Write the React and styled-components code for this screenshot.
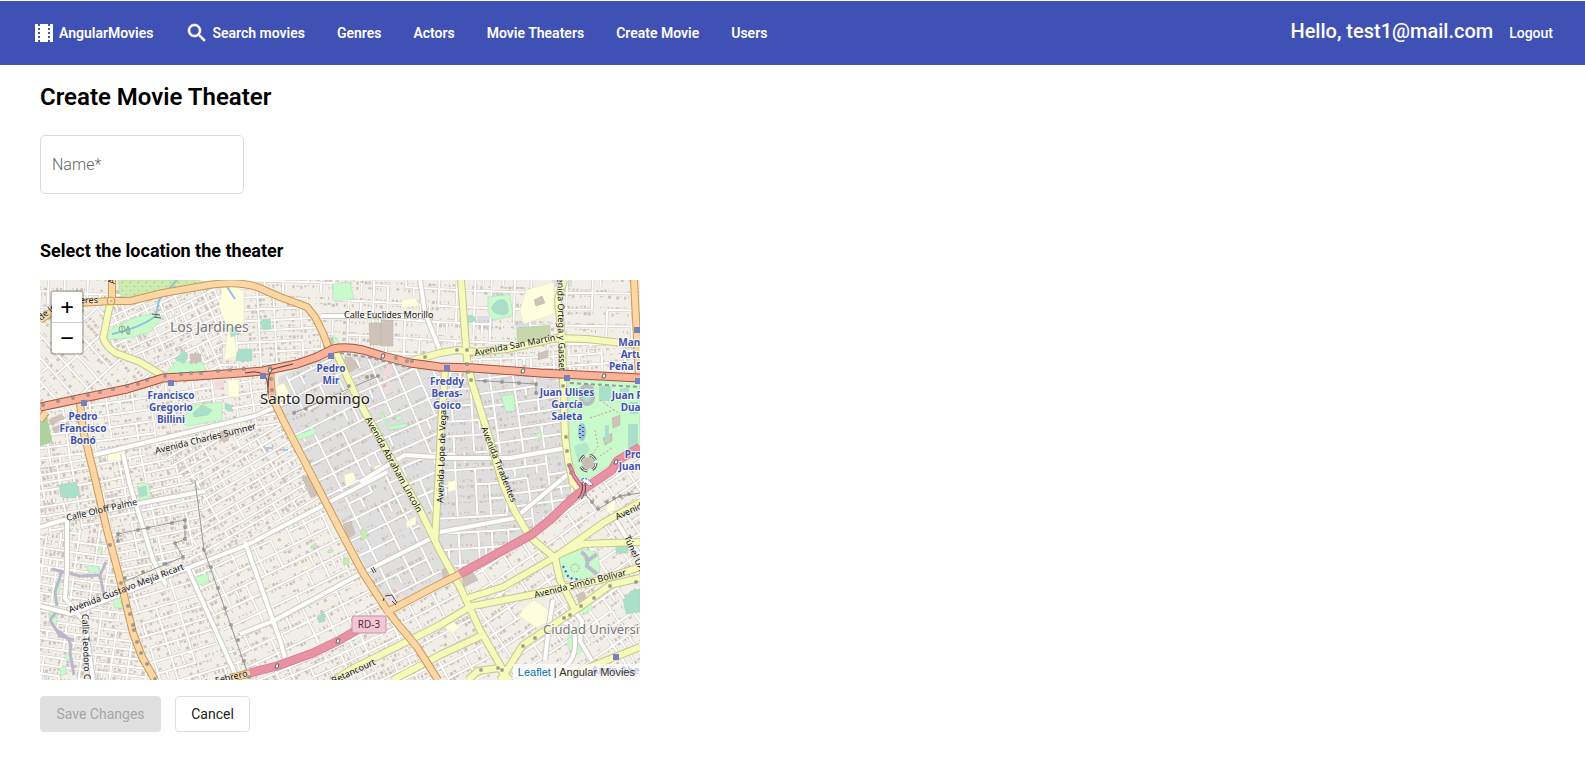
import React from "react";
import styled, { createGlobalStyle } from "styled-components";

const GlobalStyle = createGlobalStyle`
  *, *::before, *::after { box-sizing: border-box; }
  body {
    margin: 0;
    background: #fff;
    color: #000;
    font-family: Roboto, "Liberation Sans", sans-serif;
    font-size: 14px;
  }
`;

/* ---------- Toolbar ---------- */

const Toolbar = styled.header`
  display: flex;
  align-items: center;
  justify-content: space-between;
  height: 64px;
  margin-top: 1px;
  padding: 0 32px;
  background: #3f51b5;
  color: #fff;
`;

const NavLinks = styled.nav`
  display: flex;
  align-items: center;
  gap: 32px;
`;

const NavLink = styled.a`
  display: inline-flex;
  align-items: center;
  gap: 3px;
  color: inherit;
  font-size: 14px;
  font-weight: 600;
  line-height: 24px;
  text-decoration: none;
  white-space: nowrap;
`;

const Account = styled.div`
  display: flex;
  align-items: baseline;
  gap: 16px;
  padding-bottom: 4px;
`;

const Greeting = styled.span`
  font-size: 20px;
  font-weight: 500;
  line-height: 32px;
  white-space: nowrap;
`;

const LogoutButton = styled.button`
  padding: 0;
  border: 0;
  background: none;
  color: inherit;
  font: 500 14px/24px Roboto, "Liberation Sans", sans-serif;
  cursor: pointer;
`;

const ToolbarIcon = styled.svg`
  width: 24px;
  height: 24px;
  fill: currentColor;
`;

/* ---------- Form ---------- */

const Page = styled.main`
  padding: 16px 40px;
`;

const Title = styled.h1`
  margin: 0 0 22px;
  font-size: 24px;
  font-weight: 600;
  line-height: 32px;
`;

const Subtitle = styled.h2`
  margin: 41px 0 13px;
  font-size: 18px;
  font-weight: 700;
  line-height: 32px;
`;

const NameInput = styled.input`
  display: block;
  width: 204px;
  height: 59px;
  padding: 0 11px;
  border: 1px solid #dcdcdc;
  border-radius: 5px;
  background: #fff;
  color: #222;
  font: 400 16px/24px Roboto, "Liberation Sans", sans-serif;
  &::placeholder { color: #666; font-weight: 300; opacity: 1; }
`;

const Actions = styled.div`
  display: flex;
  gap: 14px;
  margin-top: 16px;
`;

const Button = styled.button`
  min-width: ${(p) => (p.$outlined ? 75 : 121)}px;
  height: 36px;
  padding: 0 15px;
  border: ${(p) => (p.$outlined ? "1px solid #e0e0e0" : "0")};
  border-radius: 4px;
  background: ${(p) => (p.$outlined ? "#fff" : "#e0e0e0")};
  color: ${(p) => (p.$outlined ? "#1c1c1c" : "#a6a6a6")};
  font: 400 14px/34px Roboto, "Liberation Sans", sans-serif;
`;

/* ---------- Map ---------- */

const MapFrame = styled.section`
  position: relative;
  width: 600px;
  max-width: 100%;
  height: 400px;
  overflow: hidden;
  background: #f2efe9;
`;

const MapDrawing = styled.svg`
  display: block;
  width: 600px;
  height: 400px;
  font-family: "Noto Sans", "Open Sans", sans-serif;
`;

const ZoomBar = styled.div`
  position: absolute;
  top: 10px;
  left: 10px;
  border: 2px solid rgba(0, 0, 0, 0.2);
  border-radius: 4px;
  background-clip: padding-box;
`;

const ZoomButton = styled.button`
  display: block;
  width: 30px;
  height: 30px;
  padding: 0;
  border: 0;
  border-radius: ${(p) => (p.$last ? "0 0 2px 2px" : "2px 2px 0 0")};
  background: #fff;
  color: #000;
  font: 400 22px/30px "DejaVu Sans Mono", monospace;
  & + & { height: 31px; border-top: 1px solid #ccc; }
`;

const Attribution = styled.div`
  position: absolute;
  right: 0;
  bottom: 0;
  padding: 0 5px;
  background: rgba(255, 255, 255, 0.7);
  color: #333;
  font: 11px/16px "Liberation Sans", Arial, sans-serif;
  a { color: #0078a8; text-decoration: none; }
`;

const District = styled.g`
  fill: none;
  .blocks { fill: #cfc2b9; }
  .kerb { stroke: #cbc6bf; stroke-width: 3; }
  .street { stroke: #fff; stroke-width: 2; }
`;

const StreetLabel = styled.text`
  fill: #111;
  stroke: rgba(255, 255, 255, 0.45);
  stroke-width: 1px;
  paint-order: stroke;
  font-size: 9px;
`;

const StationLabel = styled.text`
  fill: #4052ad;
  stroke: rgba(255, 255, 255, 0.8);
  stroke-width: 2px;
  paint-order: stroke;
  font-size: 10px;
  font-weight: 700;
`;

const areaSizes = { city: 15, suburb: 14, campus: 13 };

const AreaLabel = styled.text`
  fill: ${(p) => (p.$kind === "city" ? "#222" : "#777")};
  stroke: rgba(255, 255, 255, 0.6);
  stroke-width: 2px;
  paint-order: stroke;
  font-size: ${(p) => areaSizes[p.$kind]}px;
`;

/* Street grids: poly = outline, angle of the long streets, du/dv = block size */
const districts = [
  { poly: "0,0 600,0 600,66 430,72 370,82 300,68 275,37 240,17 203,3 163,6 90,21 60,18 0,36", angle: 2, du: 20, dv: 17 },
  { poly: "0,38 70,22 63,58 73,72 125,96 44,118 0,127", angle: 48, du: 24, dv: 15 },
  { poly: "72,22 163,7 182,5 182,90 125,96 75,72 64,58", angle: -24, du: 16, dv: 9 },
  { poly: "182,5 203,4 267,28 292,68 225,91 182,93", angle: -3, du: 21, dv: 11 },
  { poly: "430,74 600,67 600,98 525,96 430,87", angle: -3, du: 18, dv: 12 },
  { poly: "0,128 125,98 232,95 232,117 243,145 120,175 50,175 0,190", angle: -8, du: 21, dv: 12 },
  { poly: "0,188 50,175 54,200 66,245 0,257", angle: -10, du: 17, dv: 8 },
  { poly: "50,176 120,174 160,165 165,222 150,285 82,304 60,222", angle: -12, du: 26, dv: 9 },
  { poly: "120,174 243,143 270,192 283,218 144,291 165,222", angle: -30, du: 26, dv: 9 },
  { poly: "0,256 66,245 82,307 93,353 115,400 0,400", angle: 8, du: 15, dv: 9 },
  { poly: "82,308 144,287 210,395 190,400 115,400 93,350", angle: -17, du: 22, dv: 13 },
  { poly: "144,287 284,220 347,332 318,348 210,393", angle: -25, du: 19, dv: 15 },
  { poly: "238,100 295,75 328,135 405,300 348,330 243,140", angle: -26, du: 20, dv: 17 },
  { poly: "297,73 340,77 400,88 402,130 396,262 365,205 328,130", angle: -23, du: 20, dv: 17 },
  { poly: "404,90 430,90 448,150 475,233 490,256 420,294 398,262", angle: -3, du: 18, dv: 16 },
  { poly: "430,90 523,100 528,180 540,210 491,255 475,232 448,150", angle: -8, du: 20, dv: 13 },
  { poly: "420,296 491,257 545,213 600,167 600,400 465,400 440,350", angle: -34, du: 22, dv: 15 },
  { poly: "350,334 420,298 440,350 465,400 400,400 377,367", angle: -28, du: 22, dv: 14 },
  { poly: "210,396 320,350 347,334 377,367 398,400 210,400", angle: -24, du: 16, dv: 10 },
];

function seeded(seed) {
  let s = seed * 7919 + 17;
  return () => {
    s = (s * 16807) % 2147483647;
    return s / 2147483647;
  };
}

function layOut({ poly, angle, du, dv }, index) {
  const rnd = seeded(index + 3);
  const pts = poly.split(" ").map((p) => p.split(",").map(Number));
  const xs = pts.map((p) => p[0]);
  const ys = pts.map((p) => p[1]);
  const cx = (Math.min(...xs) + Math.max(...xs)) / 2;
  const cy = (Math.min(...ys) + Math.max(...ys)) / 2;
  const r = Math.hypot(Math.max(...xs) - cx, Math.max(...ys) - cy) + 6;
  let streets = "";
  let blocks = "";

  const columns = [];
  for (let u = -r; u < r; u += du * (0.7 + rnd() * 0.6)) columns.push(u);

  for (let v = -r; v < r; v += dv) {
    const bend = rnd() * 2 - 1;
    columns.forEach((u, i) => {
      const next = columns[i + 1] ?? r;
      const y = v + bend + Math.sin(i / 3) * 1.5;
      const nextY = v + bend + Math.sin((i + 1) / 3) * 1.5;
      if (rnd() > 0.14) streets += `M${u.toFixed(1)} ${y.toFixed(1)}L${next.toFixed(1)} ${nextY.toFixed(1)}`;
      if (rnd() > 0.22) streets += `M${u.toFixed(1)} ${y.toFixed(1)}v${dv}`;
      if (rnd() > 0.86) {
        streets += `M${((u + next) / 2).toFixed(1)} ${y.toFixed(1)}v${(dv * 0.6).toFixed(1)}`;
      }
    });
    for (let b = -r; b < r; b += 4) {
      for (const y of [v + 2, v + dv - 4]) {
        if (rnd() > 0.3) {
          const w = 1 + Math.floor(rnd() * 3);
          const h = 1 + Math.floor(rnd() * 3);
          blocks += `M${b.toFixed(1)} ${(y + rnd()).toFixed(1)}h${w}v${h}h${-w}z`;
        }
      }
    }
  }
  return { streets, blocks, transform: `translate(${cx} ${cy}) rotate(${angle})` };
}

const plans = districts.map((d, i) => ({ ...d, ...layOut(d, i), id: `district-${i}` }));

const greens = [
  ["#cdebb0", "M78 0H160L163 3 123 11 92 18 80 15z"],
  ["#c8facc", "M66 60L70 50 93 38 113 34 123 37 110 52 90 58z"],
  ["#c8facc", "M127 92L141 76 150 84 165 83V92L130 95z"],
  ["#aae0cb", "M135 79L144 70 148 76 144 84z"],
  ["#aae0cb", "M197 72l4-3h11v12h-16z"],
  ["#aae0cb", "M190 48l6-2 2 8-7 3z"],
  ["#c8facc", "M142 143l10-18 30-3v18l-34 6z"],
  ["#aae0cb", "M153 133l9-8 10 5-4 5-14 2z"],
  ["#aae0cb", "M185 123l6 2 2 7-8-3z"],
  ["#add19e", "M0 140l7-3 5 25-12 4z"],
  ["#aae0cb", "M19 205l17-3 4 12-6 4-13-1z"],
  ["#c8facc", "M97 204l11-1 3 14-11 4z"],
  ["#aae0cb", "M98 208l8-2 1 9-7 2z"],
  ["#c8facc", "M293 4l17-2 4 17-20 2z"],
  ["#aae0cb", "M221 40l9-1 1 10-9 1z"],
  ["#c8facc", "M290 54l8 6 2 8-8-7z"],
  ["#c8facc", "M448 17l22-3 3 22-20 4-5-8z"],
  ["#aae0cb", "M457 21q9-5 11 6t-10 7-1-13z"],
  ["#c8d7ab", "M477 48l33-3v16l-33 6z"],
  ["#aae0cb", "M426 36q10-3 9 5l-8 3z"],
  ["#c8facc", "M528 100H600V166L580 178 547 200 540 201 530 177z"],
  ["#c8facc", "M342 132l8 14 18-3-2 4-16 3-10-17z"],
  ["#c8facc", "M355 137l6-2 1 5-5 1z"],
  ["#c8facc", "M255 156l21-8v6l-20 7z"],
  ["#c8facc", "M461 116l13-2 1 17-9 1z"],
  ["#c8facc", "M495 155l6-3 1 8z"],
  ["#cdebb0", "M321 249l6 2v7l-6 2zM303 279l6-1v6l-5 1zM271 266l5-3v4l-5 2zM288 270l5-1v3l-5 1z"],
  ["#c8facc", "M518 276l20-8 20 4 2 20-14 8-22-2z"],
  ["#aae0cb", "M576 264h12v9h-12z"],
  ["#aae0cb", "M583 320l8-9 9-2v23l-14 2z"],
  ["#c8facc", "M540 330l10-7 3 5-8 6z"],
  ["#c8facc", "M154 297l14-3 1 8-12 4z"],
  ["#aae0cb", "M277 337l7-5 1 9-6 2z"],
  ["#c8facc", "M72 318l6-4 5 14h-8z"],
  ["#c8facc", "M15 311q2-14 5-12t-2 16zM9 332h6l2 12-6 2zM24 378l6-5v8zM20 388l6-2v8l-6 2z"],
  ["#c8facc", "M47 286h12v6l-10 1zM57 270l4-2 1 7z"],
  ["#c8facc", "M528 352q18-4 15 13t-15 3z"],
];

const paleAreas = [
  "M182 8l12-2 10 6v30l-10 14 4 20-14 4 4-32-9-20z",
  "M188 100h11v17h-11z",
  "M235 107l9-4 7 14-12 4z",
  "M362 20l14-2 3 8-18 2z",
  "M68 170h17v10l-17 1z",
  "M486 10l28-8v32l-30 10-4-12z",
  "M304 195l9-3 3 8-10 6z",
  "M366 242l10-6v8l-9 4z",
  "M484 327l10-7 14 10 3 10-14 8-18-12z",
  "M567 222l8-4v12l-8 3z",
  "M408 202l8-2v10l-8 2z",
  "M408 337l12 10-8 7-6-6z",
  "M334 187l8-4v6l-7 3z",
  "M262 287l5-2 1 4-5 2z",
];

const largeBuildings = [
  "M284 58h9v16h-9zM329 43h12v22h-11zM341 40h12v26h-12z",
  "M297 82l14-5 8 10-13 7z",
  "M262 197l10-3 9 19-10 5z",
  "M150 74h11v8h-10z",
  "M9 140l12-6 4 4-14 7zM12 148l16-6 2 4-15 7z",
  "M180 152l8-2v11h-8z",
  "M494 20l8-4 3 7-9 3zM498 74l10-4v7l-10 3z",
  "M303 244l8-3 4 13-7 5z",
  "M536 315l8-3 3 8-8 3z",
  "M402 290l6-4 5 10-9 6zM422 295l9-5 7 10-14 7z",
  "M563 158l9-5v8l-7 4zM572 138l8-3v10l-7 3z",
];

const whiteRoads = [
  "M50 176L215 136 260 116",
  "M0 247L20 241 96 224 165 211",
  "M0 326L31 334 145 289 207 265 347 192",
  "M200 354L233 341 322 293 398 255",
  "M205 262L240 360 245 378",
  "M83 174L90 205 113 280 126 305",
  "M147 287L198 400",
  "M27 240V290L25 318 45 343 53 400",
  "M380 0L385 33 401 73",
  "M281 36H386",
  "M320 202L365 175 410 178 470 178 526 168",
  "M400 252L475 238 533 190",
  "M571 232L586 257 600 275",
  "M513 320L509 345 505 380M510 345q24-10 25 15t-18 30",
  "M530 325l12 16-2 20 12 20",
];

const yellowRoads = [
  "M70 24L63 58Q67 68 76 73L100 82 125 97",
  "M296 72L317 118 363 200 380 230 400 271 420 307 440 350 463 390 467 400",
  "M405 90L402 130 395 262",
  "M421 0L427 80 432 103 450 160 463 205 475 232 490 257 515 278 520 300 535 330",
  "M367 82L400 73 417 70 437 72 467 69 517 58 547 59 600 65",
  "M524 0L518 20 522 57 523 100 525 157 528 180 533 203 543 213",
  "M600 222L563 243 515 277 463 307 428 318",
  "M519 274L543 264 600 262",
  "M428 327L490 315 560 300 600 287",
  "M428 328L400 345 310 390 295 400",
  "M443 355L400 375 353 400",
  "M600 298L570 305 540 327 483 365 467 390 460 400",
  "M600 367L550 387 520 400",
  "M428 400L438 391 459 388 470 400",
];

const orangeRoads = [
  "M0 40L23 24 71 21 90 21 123 13 163 6Q195 0 217 7L240 17 267 27 275 37 283 53 290 72",
  "M72 0V21",
  "M40 123L43 150 53 190 67 250 82 307 93 353 102 377 115 400",
  "M230 90L232 117 243 140 270 192 300 250 323 293 347 330 357 343 377 367 398 400",
  "M345 333L400 304 420 294",
  "M594 0L599 98",
  "M0 140L6 132",
  "M190 398L212 393",
];

const pinkRoads = [
  "M420 294L491 255 510 240 533 218 547 207 572 190 577 181 600 167",
  "M210 393L237 386 273 373 300 360 320 348",
];

const pinkSlip = ["M529 184L534 196 541 206"];

const trunkRoad =
  "M0 127L43 118 87 109 107 103 123 98 157 96 200 93 223 91 257 84 277 77 293 69Q305 66 323 70L343 76 370 83 400 87 433 88 500 93 600 98";

const railDots =
  "3,125 18,121 33,118 48,115 60,112 73,109 87,106 98,104 107,100 125,96 141,94 151,93 161,93 178,91 190,90 204,89 230,88 231,99 232,110 254,133 266,129 309,106 327,97 332,96 338,96 356,78 367,81 372,81 385,77 417,70 427,70 427,84 428,92 431,100 445,101 462,102 479,103 496,104 496,113 523,106 526,157 527,171 529,185 531,193 78,254 78,261 70,265 98,250 108,248 132,243 145,240 145,247 145,259 135,263 143,277 125,284 103,292 85,298 81,303 88,326 90,334 93,345 94,350 97,362 101,373 107,384 115,399 164,270 171,287 178,308 185,328 191,345 198,360 204,381 209,397 545,214 552,222 558,229 567,222 574,218 580,216 589,214 570,306 554,318 541,326 530,335 524,338 495,358 483,366 458,388 441,390 462,390 596,302"
    .split(" ")
    .map((p) => p.split(",").map(Number));

const stations = [
  [44, 123], [131, 103], [291, 76], [223, 96], [407, 88], [527, 98], [597, 50], [598, 101], [576, 377],
];

const stationLabels = [
  { x: 43, y: 140, lines: ["Pedro", "Francisco", "Bonó"] },
  { x: 131, y: 119, lines: ["Francisco", "Gregorio", "Billini"] },
  { x: 291, y: 92, lines: ["Pedro", "Mir"] },
  { x: 407, y: 105, lines: ["Freddy", "Beras-", "Goico"] },
  { x: 527, y: 116, lines: ["Juan Ulises", "García", "Saleta"] },
  { x: 597, y: 66, lines: ["Manuel", "Arturo", "Peña Batlle"] },
  { x: 598, y: 119, lines: ["Juan Pablo", "Duarte"] },
  { x: 606, y: 178, lines: ["Profesor", "Juan Bosch"] },
  { x: 577, y: 394, lines: ["Amín Abel"] },
];

const streetLabels = [
  { x: 304, y: 38, a: 0, t: "Calle Euclides Morillo" },
  { x: 116, y: 174, a: -14, t: "Avenida Charles Sumner" },
  { x: 27, y: 241, a: -13, t: "Calle Oloff Palme" },
  { x: 30, y: 333, a: -21, t: "Avenida Gustavo Mejía Ricart" },
  { x: 42, y: 334, a: 88, t: "Calle Teodoro Chasseriau" },
  { x: 325, y: 139, a: 61, t: "Avenida Abraham Lincoln" },
  { x: 403, y: 223, a: -88, t: "Avenida Lope de Vega" },
  { x: 441, y: 148, a: 68, t: "Avenida Tiradentes" },
  { x: 435, y: 76, a: -11, t: "Avenida San Martín" },
  { x: 519, y: 91, a: 89, t: "Avenida Ortega y Gasset", end: true },
  { x: 495, y: 318, a: -14, t: "Avenida Simón Bolívar" },
  { x: 577, y: 240, a: -25, t: "Avenida Bolívar" },
  { x: 584, y: 257, a: 66, t: "Túnel UASD" },
  { x: 336, y: 384, a: -25, t: "Avenida Rómulo Betancourt", end: true },
  { x: 208, y: 396, a: -14, t: "27 de Febrero", end: true },
  { x: 58, y: 23, a: -1, t: "Próceres", end: true },
  { x: 1, y: 41, a: -40, t: "de los" },
  { x: 75, y: 4, a: -90, t: "Avenida" },
];

function Roads({ list, casing, fill, width }) {
  return (
    <g fill="none" strokeLinejoin="round">
      {list.map((d) => <path key={d} d={d} stroke={casing} strokeWidth={width + 2} />)}
      {list.map((d) => <path key={d} d={d} stroke={fill} strokeWidth={width} />)}
    </g>
  );
}

function CityMap() {
  return (
    <MapDrawing viewBox="0 0 600 400" role="img" aria-label="Map of Santo Domingo">
      <defs>
        {plans.map((p) => (
          <clipPath key={p.id} id={p.id}><polygon points={p.poly} /></clipPath>
        ))}
        <pattern id="orchard" width="8" height="8" patternUnits="userSpaceOnUse">
          <path d="M2 2h1v1h-1zM6 6h1v1h-1z" fill="#8dbb73" />
        </pattern>
      </defs>
      <rect width="600" height="400" fill="#f2efe9" />
      <path fill="#dfdfdf" d="M238 97L293 74 343 77 400 88 523 99 528 180 540 210 491 255 420 294 350 330 243 140z" />
      <path fill="#f0dcdc" d="M345 82l7 3-2 28-9 1zM342 318l16-12 9 16-17 10zM175 100h9v10h-9z" />
      <path fill="#e8dcea" d="M144 250l6-5 2 8-7 7zM26 380h8v7h-8z" />
      <path fill="#dcdce4" d="M512 0h20v7h-20zM437 36h16v14h-15zM475 43l20-4v10l-18 3z" />
      {plans.map((p) => (
        <g key={p.id} clipPath={`url(#${p.id})`}>
          <District transform={p.transform}>
            <path className="blocks" d={p.blocks} />
            <path className="kerb" d={p.streets} />
            <path className="street" d={p.streets} />
          </District>
        </g>
      ))}
      {paleAreas.map((d) => <path key={d} d={d} fill="#ffffe0" stroke="#e6e3c0" strokeWidth=".5" />)}
      {greens.map(([c, d]) => <path key={d} d={d} fill={c} stroke="#9fcfaa" strokeWidth=".4" />)}
      <path d={greens[0][1]} fill="url(#orchard)" />
      {largeBuildings.map((d) => <path key={d} d={d} fill="#cfc2b9" stroke="#bdb0a7" strokeWidth=".5" />)}
      <g fill="none" stroke="#8ec3de" strokeWidth="2">
        <path d="M72 54Q100 48 116 36L119 20 137 0M184 2l11 17" />
        <path d="M226 168h7M242 170h6" stroke="#4ba8f5" strokeWidth="1" />
      </g>
      <g fill="none" stroke="#8aa892" strokeWidth="1">
        <circle cx="82" cy="49" r="3" />
        <path d="M82 46v8M88 46q-4 7 0 8t0-8v9" />
        <path d="M112 34l8 1M114 37l7 1" stroke="#555" />
      </g>
      {/* Leisure park */}
      <g fill="#aae0cb">
        <path d="M559 106h12v15h-12zM580 108h9v9h-9zM590 122h8v12h-8zM588 144h10v28h-10zM565 145h4v17h-4z" />
        <rect x="539" y="104" width="16" height="22" rx="8" fill="#b9bcbf" />
        <rect x="543" y="108" width="8" height="14" rx="4" />
        <path d="M534 166l12-4 4 8-12 12z" opacity=".7" />
      </g>
      <path d="M555 150l3 16-8 12M560 120l20 14M550 138l24-8M560 176l12-8" stroke="#e8928a" strokeDasharray="2 2" fill="none" />
      <ellipse cx="542" cy="152" rx="4" ry="9" fill="#9bc5cd" />
      <path d="M540 145v14M543 147v10" stroke="#2946e0" strokeDasharray="1 3" fill="none" strokeWidth="2" />
      <circle cx="548" cy="183" r="6" fill="#c9bcb3" />
      <circle cx="548" cy="183" r="8" fill="none" stroke="#666" strokeWidth="3" strokeDasharray="8 5" />
      <circle cx="548" cy="183" r="8" fill="none" stroke="#fff" strokeWidth="1" strokeDasharray="8 5" />
      {/* Lower right plaza and the stream in the west */}
      <path d="M541 272q8 4 6 14l10 8M546 282l11-8" stroke="#bcbccc" strokeWidth="4" fill="none" />
      <circle cx="535" cy="288" r="4" fill="none" stroke="#a98" strokeDasharray="1 1" />
      <path d="M523 286l6 12 12 2" stroke="#3159dc" strokeWidth="2" strokeDasharray="2 3" fill="none" />
      <path d="M12 289L40 296 60 295 66 282M22 291L15 312 17 326M60 295l4 20M10 340l10 16 14 4M16 350Q34 358 30 372L34 395M10 340l6-8 8 2" stroke="#b9b9ca" strokeWidth="3" fill="none" />

      <Roads list={whiteRoads} casing="#d0cbc4" fill="#fff" width={4} />
      <g fill="none" stroke="#999" strokeWidth="1">
        <path d="M78 261V254L145 240 145 259 135 263 143 277 81 303M155 200L164 270 209 397M254 133L338 96M428 92L431 100 496 104v9M545 214L558 229 580 216 600 213" />
      </g>
      <Roads list={yellowRoads} casing="#c6c88c" fill="#f6fabb" width={6} />
      <Roads list={orangeRoads} casing="#c99a55" fill="#fcd6a4" width={6} />
      <Roads list={pinkSlip} casing="#c9607c" fill="#e892a2" width={2} />
      <Roads list={pinkRoads} casing="#d98095" fill="#e892a2" width={7} />
      <path d="M230 90L232 117" stroke="#f9b29c" strokeWidth="5" />
      <Roads list={[trunkRoad]} casing="#a5523c" fill="#f9b29c" width={7} />
      <path d="M300 73L332 78 370 88M530 103L600 107" stroke="#999" strokeDasharray="4 3" strokeWidth="2" fill="none" />
      <path d="M205 93q20-5 23 10v12M253 84l-20 5q-5 3-5 18M538 218q6-6 4-16M541 219q6-6 4-16" stroke="#574039" fill="none" />
      <path d="M345 316l7-1 5 8M344 318l-1 3M352 321l4 4M331 288l3 5M333 287l3 5" stroke="#444" fill="none" />
      <circle cx="71" cy="21" r="4" fill="#fcd6a4" stroke="#c99a55" />
      <circle cx="71" cy="21" r="1" fill="#8fcf9b" />
      <g fill="#fff" stroke="#666">
        {[[343, 76], [483, 91], [564, 96], [237, 386], [298, 361], [576, 182], [230, 90]].map(([x, y]) => (
          <path key={x} d={`M${x - 1} ${y - 2}h3l-1 4h-3z`} />
        ))}
      </g>
      <path d="M542 199q6-2 11 6l-4 1q-3-4-7-4z" fill="#fff" stroke="#345ccc" strokeDasharray="2 1" />
      <g fill="#fff" stroke="#777">
        {railDots.map(([x, y], i) => <rect key={i} x={x - 1} y={y - 1} width="2" height="2" />)}
      </g>

      {streetLabels.map((l) => (
        <StreetLabel key={l.t} textAnchor={l.end ? "end" : "start"} transform={`translate(${l.x} ${l.y}) rotate(${l.a})`}>
          {l.t}
        </StreetLabel>
      ))}
      {stations.map(([x, y]) => <rect key={x} x={x - 3} y={y - 3} width="6" height="6" fill="#7680bd" />)}
      {stationLabels.map((s) => (
        <StationLabel key={s.lines.join(" ")} textAnchor="middle">
          {s.lines.map((line, i) => <tspan key={line} x={s.x} y={s.y + i * 12}>{line}</tspan>)}
        </StationLabel>
      ))}
      <AreaLabel $kind="suburb" x="130" y="52">Los Jardines</AreaLabel>
      <AreaLabel $kind="campus" x="503" y="354">Ciudad Universitaria</AreaLabel>
      <AreaLabel $kind="city" x="220" y="124">Santo Domingo</AreaLabel>
      <rect x="312" y="336" width="34" height="17" rx="2" fill="#eec8d2" stroke="#cf8ba0" />
      <text x="329" y="348" textAnchor="middle" fontSize="10" fill="#6b1d3c">RD-3</text>
    </MapDrawing>
  );
}

export default function App() {
  return (
    <>
      <GlobalStyle />
      <Toolbar>
        <NavLinks>
          <NavLink href="#home">
            <ToolbarIcon viewBox="0 0 24 24" aria-hidden="true">
              <path d="M18 3v2h-2V3H8v2H6V3H3v18h3v-2h2v2h8v-2h2v2h3V3h-3zM8 17H6v-2h2v2zm0-4H6v-2h2v2zm0-4H6V7h2v2zm10 8h-2v-2h2v2zm0-4h-2v-2h2v2zm0-4h-2V7h2v2z" />
            </ToolbarIcon>
            AngularMovies
          </NavLink>
          <NavLink href="#search">
            <ToolbarIcon viewBox="0 0 24 24" aria-hidden="true">
              <path d="M15.5 14h-.79l-.28-.27C15.41 12.59 16 11.11 16 9.5 16 5.91 13.09 3 9.5 3S3 5.91 3 9.5 5.91 16 9.5 16c1.61 0 3.09-.59 4.23-1.57l.27.28v.79l5 4.99L20.49 19l-4.99-5zm-6 0C7.01 14 5 11.99 5 9.5S7.01 5 9.5 5 14 7.01 14 9.5 11.99 14 9.5 14z" stroke="currentColor" strokeWidth=".5" />
            </ToolbarIcon>
            Search movies
          </NavLink>
          <NavLink href="#genres">Genres</NavLink>
          <NavLink href="#actors">Actors</NavLink>
          <NavLink href="#theaters">Movie Theaters</NavLink>
          <NavLink href="#create">Create Movie</NavLink>
          <NavLink href="#users">Users</NavLink>
        </NavLinks>
        <Account>
          <Greeting>Hello, test1@mail.com</Greeting>
          <LogoutButton type="button">Logout</LogoutButton>
        </Account>
      </Toolbar>
      <Page>
        <Title>Create Movie Theater</Title>
        <form>
          <NameInput type="text" name="name" aria-label="Name" placeholder="Name*" required />
          <Subtitle>Select the location the theater</Subtitle>
          <MapFrame>
            <CityMap />
            <ZoomBar>
              <ZoomButton type="button" aria-label="Zoom in">+</ZoomButton>
              <ZoomButton type="button" aria-label="Zoom out" $last>−</ZoomButton>
            </ZoomBar>
            <Attribution>
              <a href="#leaflet">Leaflet</a> | Angular Movies
            </Attribution>
          </MapFrame>
          <Actions>
            <Button type="submit" disabled>Save Changes</Button>
            <Button type="button" $outlined>Cancel</Button>
          </Actions>
        </form>
      </Page>
    </>
  );
}
